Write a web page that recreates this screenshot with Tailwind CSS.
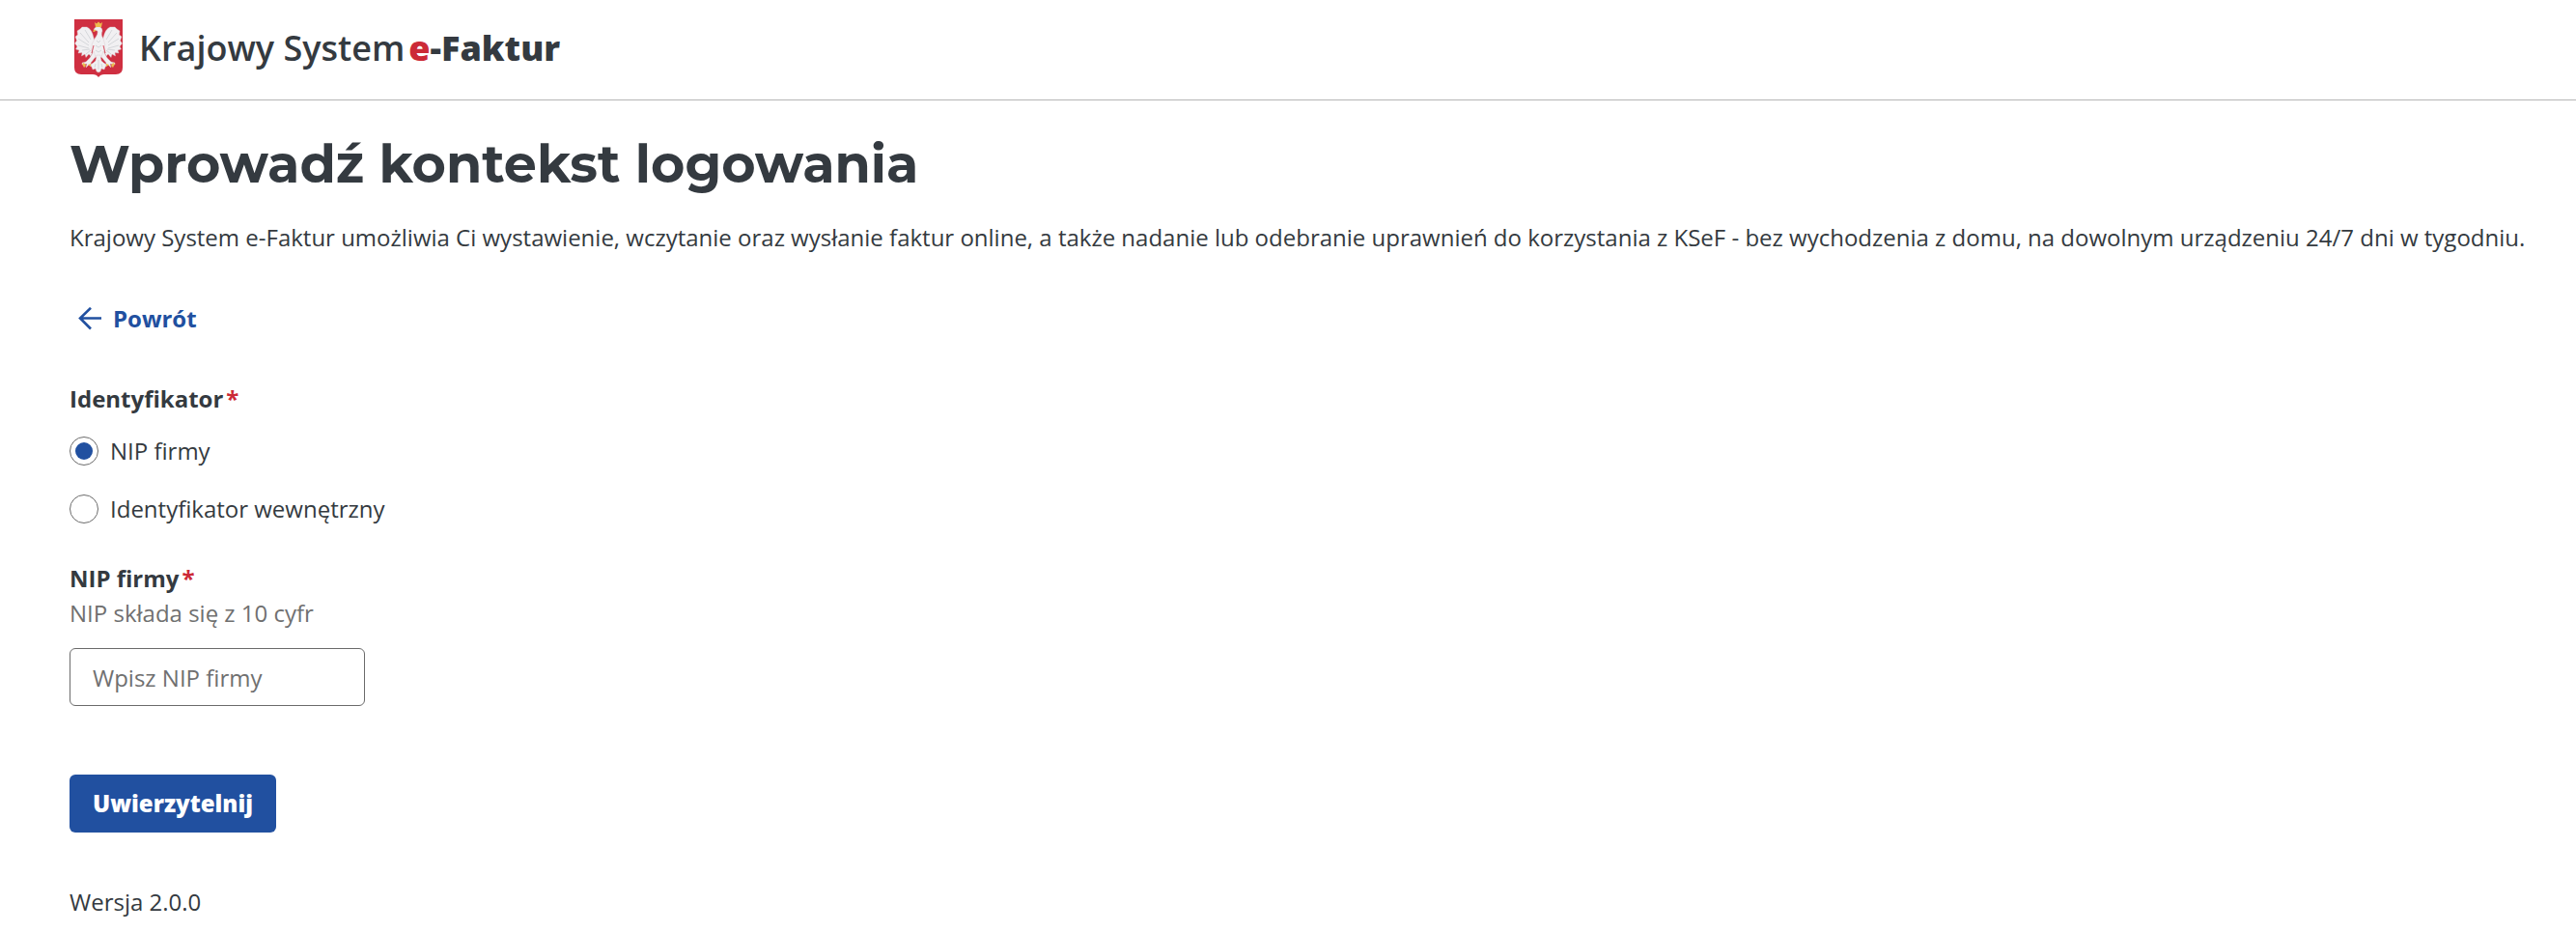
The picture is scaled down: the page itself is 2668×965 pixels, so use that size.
<!DOCTYPE html>
<html lang="pl">
<head>
  <meta charset="UTF-8">
  <meta name="viewport" content="width=device-width, initial-scale=1.0">
  <title>Krajowy System e-Faktur</title>
  <script src="https://cdn.jsdelivr.net/npm/@tailwindcss/browser@4"></script>
</head>
<body class="bg-white font-['Open_Sans','Noto_Sans',sans-serif] text-2xl leading-9 text-[#343a40]">

  <!-- Header -->
  <header class="flex h-[104px] items-center border-b border-[#b5b5b5] px-[72px] pb-1">
    <a href="#" class="flex items-center gap-[17px] pl-[5px]">
      <svg class="h-[60px] w-[50px]" viewBox="0 0 50 60" aria-hidden="true">
        <path fill="#cf2f41" d="M0 0H50V50Q50 57 43 57H31Q27 57 25 60Q23 57 19 57H7Q0 57 0 50Z" />
        <g fill="#f1f0f2" stroke="#d9c5cb" stroke-width=".4">
          <!-- Wings -->
          <path d="M20 19Q18 10 13 8L8 8L6 10L3 12L3.500 16L1 18L2.500 22L0.500 25L3 28L1.500 31L5 32L4 35L8 34.500L7.500 38L11 36L12 39.500L15 36L17 38L20 31L21 24Z" />
          <path d="M30 19Q32 10 37 8L42 8L44 10L47 12L46.500 16L49 18L47.500 22L49.500 25L47 28L48.500 31L45 32L46 35L42 34.500L42.500 38L39 36L38 39.500L35 36L33 38L30 31L29 24Z" />
          <!-- Head and body -->
          <path d="M20 11Q21 7.500 25 7.500Q29 8 29 12Q27 16 30 20Q33 26 31 33L29 39H21L18 32Q17 25 21 20Q25 15 24 12Z" />
          <!-- Legs -->
          <path d="M20 33L16 40L12 44L8 45L8 47L13 46L12 50L15 47L18 49L17 45L22 39Z" />
          <path d="M30 33L34 40L38 44L42 45L42 47L37 46L38 50L35 47L32 49L33 45L28 39Z" />
          <!-- Tail -->
          <path d="M23 37H27L28 43L33 47L31 52L28 51L27 54L25 55L23 54L22 51L19 52L17 47L22 43Z" />
        </g>
        <g fill="none" stroke="#c9cbd0" stroke-width=".7">
          <path d="M6 14L15 24M4 20L15 27M4 27L15 30M8 32L16 31M12 36L17 32M11 11L17 21" />
          <path d="M44 14L35 24M46 20L35 27M46 27L35 30M42 32L34 31M38 36L33 32M39 11L33 21" />
          <path d="M23 22L25 24L27 22M22 27L25 29L28 27M22 32L25 34L28 32M25 42V52M22 46L21 50M28 46L29 50" />
        </g>
        <path fill="none" stroke="#cf2f41" stroke-width=".8" d="M20 27L18 35M30 27L32 35M22 40L19 45M28 40L31 45" />
        <g fill="#edbc4c">
          <path d="M21 3L23 4.500L25 2.500L27 4.500L29 3L28 8H22Z" />
          <path d="M19 12.500L20.500 10.500L22.500 11L21 13Z" />
          <path d="M8 46L10 45L12 48L10 50ZM42 46L40 45L38 48L40 50ZM14 47L17 46L17 49ZM36 47L33 46L33 49Z" />
        </g>
      </svg>
      <span class="flex gap-1 text-4xl whitespace-nowrap">
        <span class="font-semibold">Krajowy System</span>
        <span class="font-extrabold"><span class="text-[#cc2a37]">e</span>-Faktur</span>
      </span>
    </a>
  </header>

  <main class="px-[72px] pt-6 pb-3 pr-12">
    <h1 class="font-['Montserrat','Inter',sans-serif] text-[54px] leading-[84px] font-bold">Wprowadź kontekst logowania</h1>
    <p class="mt-4">Krajowy System e-Faktur umożliwia Ci wystawienie, wczytanie oraz wysłanie faktur online, a także nadanie lub odebranie uprawnień do korzystania z KSeF - bez wychodzenia z domu, na dowolnym urządzeniu 24/7 dni w tygodniu.</p>

    <!-- Back -->
    <a href="#" class="mt-12 inline-flex items-center gap-3 pl-[9px] font-bold text-[#2150a0] hover:underline">
      <svg class="size-6" viewBox="0 0 24 24" fill="none" stroke="currentColor" stroke-width="2.600" aria-hidden="true">
        <path d="M24 11.500H2M13 0.800L2 11.500L13 22.500" />
      </svg>
      Powrót
    </a>

    <form>
      <!-- Identifier type -->
      <fieldset class="mt-11">
        <legend class="font-bold">Identyfikator<span class="ml-[3px] text-[#cc2a37]">*</span></legend>
        <div class="mt-[18px] flex items-center gap-3">
          <input type="radio" id="nip" name="identifier" checked class="size-[30px] appearance-none rounded-full border border-[#6b6b6b] bg-white bg-clip-content p-[5px] checked:bg-[#2150a0]">
          <label for="nip">NIP firmy</label>
        </div>
        <div class="mt-6 flex items-center gap-3">
          <input type="radio" id="internal" name="identifier" class="size-[30px] appearance-none rounded-full border border-[#6b6b6b] bg-white bg-clip-content p-[5px] checked:bg-[#2150a0]">
          <label for="internal">Identyfikator wewnętrzny</label>
        </div>
      </fieldset>

      <!-- NIP number -->
      <div class="mt-9">
        <label for="nipNumber" class="block font-bold">NIP firmy<span class="ml-[3px] text-[#cc2a37]">*</span></label>
        <p id="nipHint" class="text-[#707070]">NIP składa się z 10 cyfr</p>
        <input type="text" id="nipNumber" aria-describedby="nipHint" placeholder="Wpisz NIP firmy" class="mt-[18px] block h-[60px] w-[306px] rounded-md border border-[#6b6b6b] px-[23px] placeholder:text-[#707070]">
      </div>

      <button type="submit" class="mt-[71px] block h-[60px] rounded-md bg-[#2150a0] px-6 font-extrabold text-white hover:bg-[#1a4080]">Uwierzytelnij</button>
    </form>

    <p class="mt-[54px]">Wersja 2.0.0</p>
  </main>

</body>
</html>
